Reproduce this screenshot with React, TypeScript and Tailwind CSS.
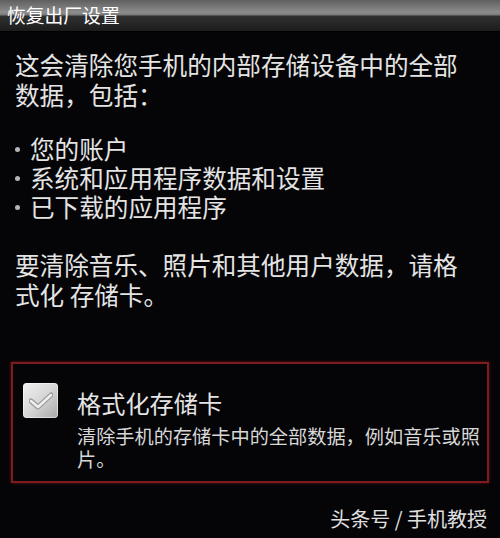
import { Check } from 'lucide-react';

const font = { fontFamily: '"Noto Sans CJK SC", "Noto Sans", sans-serif' };

const bullets = ['您的账户', '系统和应用程序数据和设置', '已下载的应用程序'];

function CheckBox() {
  return (
    <div className="relative w-[35px] h-[35px] shrink-0 rounded-[4px] bg-gradient-to-br from-[#f2f2f2] via-[#d6d6d6] to-[#a9a9a9] shadow-[inset_0_0_0_1px_rgba(255,255,255,0.5)] flex items-center justify-center">
      <svg width="24" height="18" viewBox="0 0 24 18" className="mt-[1px]">
        <path d="M2 9 L9 15 L22 3" fill="none" stroke="#9b9b9b" strokeWidth="5" strokeLinecap="round" strokeLinejoin="round" />
        <path d="M2 9 L9 15 L22 3" fill="none" stroke="#efefef" strokeWidth="2.5" strokeLinecap="round" strokeLinejoin="round" />
      </svg>
    </div>
  );
}

export default function App() {
  return (
    <div className="w-[500px] h-[538px] overflow-hidden bg-[#050507] text-[#e4e4e4]" style={font}>
      {/* Title bar */}
      <div className="h-[32px] flex items-center px-[7px] border-b border-black bg-[linear-gradient(to_bottom,#5f5f5f_0%,#8d8d8d_40%,#7a7a7a_48%,#303030_52%,#1c1c1c_100%)]">
        <span className="text-[18.8px] leading-none text-white">恢复出厂设置</span>
      </div>

      {/* Body */}
      <div className="pl-[15px] pr-[30px] pt-[17px]">
        <p className="text-[24.6px] leading-[30px]">这会清除您手机的内部存储设备中的全部数据，包括：</p>

        <ul className="mt-[25px]">
          {bullets.map((b) => (
            <li key={b} className="flex items-center text-[24.6px] leading-[29px]">
              <span className="w-[15px] shrink-0 flex">
                <span className="w-[5px] h-[5px] rounded-full bg-[#b5b5b5] mt-[2px]" />
              </span>
              {b}
            </li>
          ))}
        </ul>

        <p className="mt-[28px] text-[24.6px] leading-[30px]">要清除音乐、照片和其他用户数据，请格式化 存储卡。</p>
      </div>

      {/* Format SD card option */}
      <div className="mx-[11px] mt-[53px] border-2 border-[#7e1b1f] shadow-[0_0_3px_rgba(160,30,40,0.6)] pl-[10px] pt-[19px] pb-[10px] flex gap-[19px]">
        <CheckBox />
        <div className="flex-1 pr-[4px]">
          <div className="mt-[5px] text-[24.2px] leading-[30px]">格式化存储卡</div>
          <div className="mt-[7px] text-[19.2px] leading-[23px] text-[#d8d8d8]">
            清除手机的存储卡中的全部数据，例如音乐或照片。
          </div>
        </div>
      </div>

      {/* Watermark */}
      <div className="mt-[24px] pr-[13px] text-right text-[20px] leading-[24px] text-[#e0e0e0]">头条号 / 手机教授</div>
    </div>
  );
}
